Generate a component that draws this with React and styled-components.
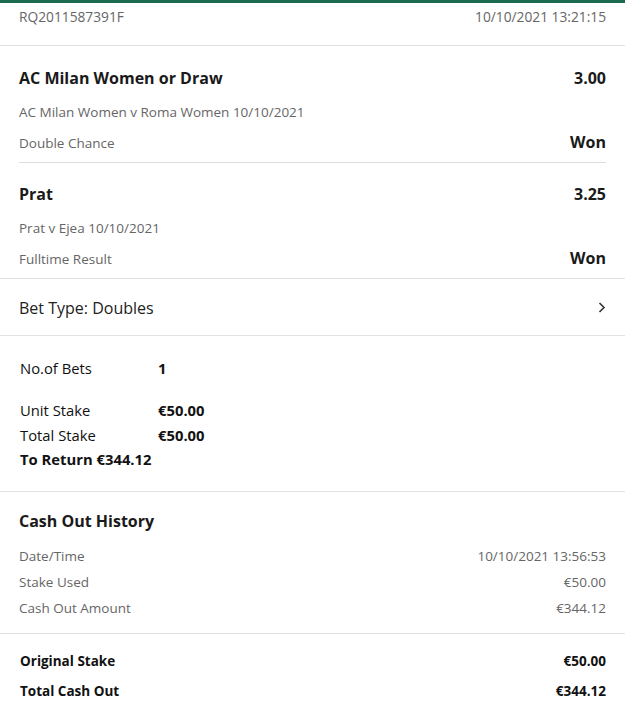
import React from 'react'
import styled, { createGlobalStyle } from 'styled-components'

const GlobalStyle = createGlobalStyle`
  body {
    margin: 0;
    background: #fff;
    font-family: "Open Sans", "Noto Sans", sans-serif;
    color: #1a1a1a;
  }
`

const selections = [
  {
    name: 'AC Milan Women or Draw',
    odds: '3.00',
    event: 'AC Milan Women v Roma Women 10/10/2021',
    market: 'Double Chance',
    result: 'Won',
  },
  {
    name: 'Prat',
    odds: '3.25',
    event: 'Prat v Ejea 10/10/2021',
    market: 'Fulltime Result',
    result: 'Won',
  },
]

const history = [
  ['Date/Time', '10/10/2021 13:56:53'],
  ['Stake Used', '€50.00'],
  ['Cash Out Amount', '€344.12'],
]

export default function App() {
  return (
    <Page>
      <GlobalStyle />
      <Header>
        <Muted>RQ2011587391F</Muted>
        <Muted>10/10/2021 13:21:15</Muted>
      </Header>

      <Selections>
        {selections.map((s, i) => (
          <Selection key={s.name} last={i === selections.length - 1}>
            <Row>
              <Title>{s.name}</Title>
              <Title>{s.odds}</Title>
            </Row>
            <EventLine>{s.event}</EventLine>
            <Row>
              <Sub>{s.market}</Sub>
              <Result>{s.result}</Result>
            </Row>
          </Selection>
        ))}
      </Selections>

      <BetType>
        <span>Bet Type: Doubles</span>
        <svg width="8" height="11" viewBox="0 0 8 11">
          <path d="M1.5 1 L6 5.5 L1.5 10" fill="none" stroke="#333" strokeWidth="1.6" />
        </svg>
      </BetType>

      <Summary>
        <SummaryRow>
          <span>No.of Bets</span>
          <strong>1</strong>
        </SummaryRow>
        <Spacer />
        <SummaryRow>
          <span>Unit Stake</span>
          <strong>€50.00</strong>
        </SummaryRow>
        <SummaryRow>
          <span>Total Stake</span>
          <strong>€50.00</strong>
        </SummaryRow>
        <Return>To Return €344.12</Return>
      </Summary>

      <CashOut>
        <Title>Cash Out History</Title>
        <HistoryList>
          {history.map(([label, value]) => (
            <Row key={label}>
              <Sub>{label}</Sub>
              <Sub>{value}</Sub>
            </Row>
          ))}
        </HistoryList>
      </CashOut>

      <Totals>
        <Row>
          <TotalText>Original Stake</TotalText>
          <TotalText>€50.00</TotalText>
        </Row>
        <Row>
          <TotalText>Total Cash Out</TotalText>
          <TotalText>€344.12</TotalText>
        </Row>
      </Totals>
    </Page>
  )
}

const Page = styled.div`
  width: 625px;
  border-top: 3px solid #1b6b50;
`

const Header = styled.div`
  display: flex;
  justify-content: space-between;
  padding: 4px 19px 0;
  height: 38px;
  border-bottom: 1px solid #e2e2e2;
`

const Muted = styled.span`
  font-size: 13.75px;
  color: #666;
  line-height: 19px;
`

const Selections = styled.div`
  padding: 0 19px;
  border-bottom: 1px solid #e2e2e2;
`

const Selection = styled.div`
  display: flex;
  flex-direction: column;
  padding: ${p => (p.last ? '20px 0 3px' : '21px 0 3px')};
  border-bottom: ${p => (p.last ? 'none' : '1px solid #dcdcdc')};
`

const Row = styled.div`
  display: flex;
  justify-content: space-between;
  align-items: center;
`

const Title = styled.span`
  font-size: 16px;
  font-weight: 700;
  color: #1a1a1a;
  line-height: 22px;
`

const Sub = styled.span`
  font-size: 13.5px;
  color: #666;
  line-height: 19px;
  padding: 6px 0;
`

const EventLine = styled(Sub)`
  padding-top: 14px;
`

const Result = styled.span`
  font-size: 16px;
  font-weight: 700;
  color: #1a1a1a;
  margin-top: -3px;
`

const BetType = styled.div`
  display: flex;
  justify-content: space-between;
  align-items: center;
  height: 57px;
  padding: 1px 19px 0;
  box-sizing: border-box;
  font-size: 16px;
  color: #222;
  border-bottom: 1px solid #e2e2e2;
`

const Summary = styled.div`
  padding: 20px 20px 19px;
  border-bottom: 1px solid #e2e2e2;
  font-size: 14.8px;
  color: #111;
`

const SummaryRow = styled.div`
  display: grid;
  grid-template-columns: 138px auto;
  line-height: 25px;
  strong {
    font-weight: 700;
  }
`

const Spacer = styled.div`
  height: 17px;
`

const Return = styled.div`
  font-weight: 700;
  line-height: 25px;
  margin-top: -1px;
`

const CashOut = styled.div`
  padding: 18px 19px 12px;
  border-bottom: 1px solid #e2e2e2;
`

const HistoryList = styled.div`
  display: flex;
  flex-direction: column;
  margin-top: 11px;
  ${Sub} {
    padding: 3.5px 0;
  }
`

const Totals = styled.div`
  display: flex;
  flex-direction: column;
  gap: 12px;
  padding: 18px 19px 18px 20px;
`

const TotalText = styled.span`
  font-size: 13.5px;
  font-weight: 700;
  color: #111;
  line-height: 18px;
`
